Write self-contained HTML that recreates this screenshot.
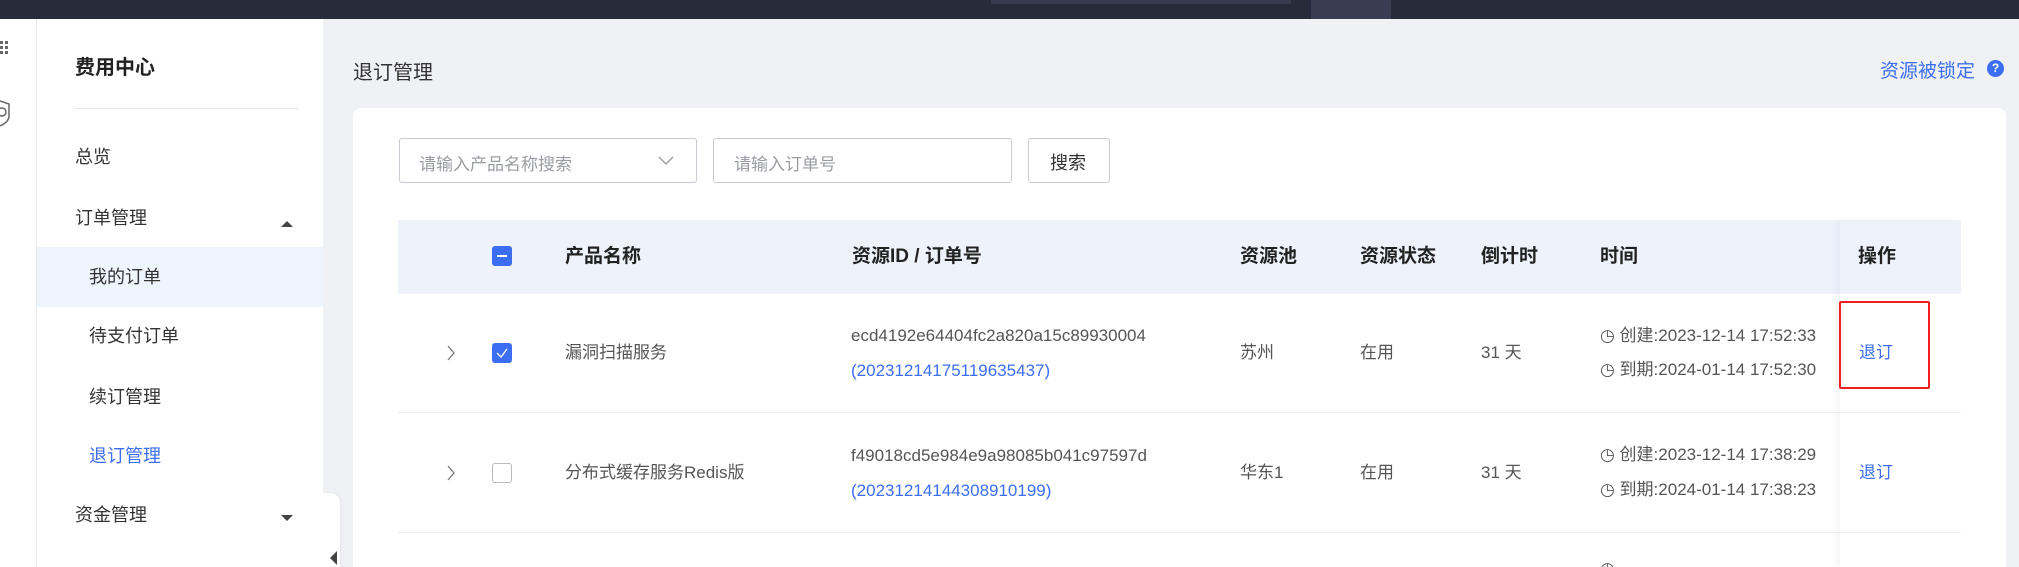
<!DOCTYPE html>
<html><head><meta charset="utf-8"><style>
*{margin:0;padding:0;box-sizing:border-box}
html{width:2019px;height:567px;overflow:hidden}
body{width:2019px;height:567px;overflow:hidden;background:#f0f1f5;font-family:"Liberation Sans","Noto Sans CJK SC",sans-serif;color:#333;position:relative}
.a{position:absolute;white-space:nowrap}
.top{left:0;top:0;width:2019px;height:19px;background:#272b3a}
.strip{left:0;top:19px;width:37px;height:548px;background:#fff;border-right:1px solid #e8e8ee}
.nav{left:37px;top:19px;width:286px;height:548px;background:#fff}
.mi{font-size:18px;color:#333;line-height:24px}
.card{left:353px;top:108px;width:1653px;height:459px;background:#fff;border-radius:8px 8px 0 0}
.box{border:1px solid #c9cbd2;border-radius:3px;background:#fff}
.ph{font-size:17px;color:#9a9ca3}
.th{font-size:19px;font-weight:bold;color:#222;line-height:24px}
.td{font-size:17px;color:#555;line-height:22px}
.bl{color:#3b6ef0}
.cb{width:20px;height:20px;border-radius:3px}
.hl{height:1px;background:#ebedf2}
</style></head><body>
<div class="a top"></div>
<div class="a" style="left:991px;top:0;width:300px;height:4px;background:#363b4d"></div>
<div class="a" style="left:1311px;top:0;width:80px;height:19px;background:#373e53"></div>
<div class="a strip"></div>
<svg class="a" style="left:0;top:40px" width="12" height="16"><g fill="#666"><rect x="0" y="1" width="3" height="3"/><rect x="5" y="1" width="3" height="3"/><rect x="0" y="6" width="3" height="3"/><rect x="5" y="6" width="3" height="3"/><rect x="0" y="11" width="3" height="3"/><rect x="5" y="11" width="3" height="3"/></g></svg>
<svg class="a" style="left:0;top:98px" width="12" height="30"><path d="M0 3 L9 6 V18 Q9 24 0 28" fill="none" stroke="#666" stroke-width="1.5"/><circle cx="2" cy="14" r="4" fill="none" stroke="#666" stroke-width="1.5"/></svg>
<div class="a nav"></div>
<div class="a" style="left:75px;top:51px;font-size:20px;font-weight:bold;color:#222">费用中心</div>
<div class="a" style="left:75px;top:108px;width:224px;height:1px;background:#e4e6ec"></div>
<div class="a mi" style="left:75px;top:145px">总览</div>
<div class="a mi" style="left:75px;top:206px">订单管理</div>
<div class="a" style="left:281px;top:221px;width:0;height:0;border-left:6px solid transparent;border-right:6px solid transparent;border-bottom:6px solid #444"></div>
<div class="a" style="left:37px;top:247px;width:286px;height:60px;background:#eef5fe"></div>
<div class="a mi" style="left:89px;top:265px">我的订单</div>
<div class="a mi" style="left:89px;top:324px">待支付订单</div>
<div class="a mi" style="left:89px;top:385px">续订管理</div>
<div class="a mi" style="left:89px;top:444px;color:#3b6ef0">退订管理</div>
<div class="a mi" style="left:75px;top:503px">资金管理</div>
<div class="a" style="left:281px;top:515px;width:0;height:0;border-left:6px solid transparent;border-right:6px solid transparent;border-top:6px solid #444"></div>
<div class="a" style="left:323px;top:493px;width:17px;height:74px;background:#fff;border-radius:0 10px 0 0;box-shadow:1px 0 3px rgba(0,0,0,.05)"></div>
<div class="a" style="left:330px;top:551px;width:0;height:0;border-top:7px solid transparent;border-bottom:7px solid transparent;border-right:7px solid #444"></div>

<div class="a" style="left:353px;top:56px;font-size:20px;color:#333">退订管理</div>
<div class="a bl" style="left:1880px;top:56px;font-size:19px">资源被锁定</div>
<div class="a" style="left:1987px;top:60px;width:17px;height:17px;border-radius:50%;background:#3b6ef0;color:#fff;font-size:12px;font-weight:bold;text-align:center;line-height:17px">?</div>

<div class="a card"></div>
<div class="a box" style="left:399px;top:138px;width:298px;height:45px"></div>
<div class="a ph" style="left:419px;top:150px">请输入产品名称搜索</div>
<svg class="a" style="left:658px;top:155px" width="16" height="12"><path d="M1 2 L8 9 L15 2" fill="none" stroke="#999" stroke-width="1.3"/></svg>
<div class="a box" style="left:713px;top:138px;width:299px;height:45px"></div>
<div class="a ph" style="left:734px;top:150px">请输入订单号</div>
<div class="a box" style="left:1028px;top:138px;width:82px;height:45px"></div>
<div class="a" style="left:1050px;top:149px;font-size:18px;color:#333">搜索</div>

<div class="a" style="left:398px;top:220px;width:1563px;height:74px;background:#eef2fb"></div>
<div class="a" style="left:1840px;top:220px;width:121px;height:347px;box-shadow:-4px 0 6px rgba(0,0,0,.04)"></div>
<div class="a" style="left:1840px;top:220px;width:121px;height:74px;background:#eef2fb"></div>
<div class="a cb" style="left:492px;top:246px;background:#3b6ef0"><div style="position:absolute;left:5px;top:9px;width:10px;height:2px;background:#fff"></div></div>
<div class="a th" style="left:565px;top:245px">产品名称</div>
<div class="a th" style="left:852px;top:245px">资源ID / 订单号</div>
<div class="a th" style="left:1240px;top:245px">资源池</div>
<div class="a th" style="left:1360px;top:245px">资源状态</div>
<div class="a th" style="left:1481px;top:245px">倒计时</div>
<div class="a th" style="left:1600px;top:245px">时间</div>
<div class="a th" style="left:1858px;top:245px">操作</div>

<div class="a hl" style="left:398px;top:412px;width:1563px"></div>
<div class="a hl" style="left:398px;top:532px;width:1563px"></div>

<svg class="a" style="left:446px;top:344px" width="10" height="18"><path d="M2 2 L8 9 L2 16" fill="none" stroke="#777" stroke-width="1.3"/></svg>
<div class="a cb" style="left:492px;top:343px;background:#3b6ef0"><svg width="20" height="20"><path d="M5 10 L9 14 L15 6" fill="none" stroke="#fff" stroke-width="1.3"/></svg></div>
<div class="a td" style="left:565px;top:342px">漏洞扫描服务</div>
<div class="a td" style="left:851px;top:325px">ecd4192e64404fc2a820a15c89930004</div>
<div class="a td bl" style="left:851px;top:360px">(20231214175119635437)</div>
<div class="a td" style="left:1240px;top:342px">苏州</div>
<div class="a td" style="left:1360px;top:342px">在用</div>
<div class="a td" style="left:1481px;top:342px">31 天</div>
<div class="a td" style="left:1600px;top:325px">◷ 创建:2023-12-14 17:52:33</div>
<div class="a td" style="left:1600px;top:359px">◷ 到期:2024-01-14 17:52:30</div>
<div class="a td bl" style="left:1859px;top:342px">退订</div>
<div class="a" style="left:1839px;top:301px;width:91px;height:88px;border:2px solid #f02020;border-radius:2px"></div>

<svg class="a" style="left:446px;top:464px" width="10" height="18"><path d="M2 2 L8 9 L2 16" fill="none" stroke="#777" stroke-width="1.3"/></svg>
<div class="a cb" style="left:492px;top:463px;border:1px solid #bbb;background:#fff"></div>
<div class="a td" style="left:565px;top:462px">分布式缓存服务Redis版</div>
<div class="a td" style="left:851px;top:445px">f49018cd5e984e9a98085b041c97597d</div>
<div class="a td bl" style="left:851px;top:480px">(20231214144308910199)</div>
<div class="a td" style="left:1240px;top:462px">华东1</div>
<div class="a td" style="left:1360px;top:462px">在用</div>
<div class="a td" style="left:1481px;top:462px">31 天</div>
<div class="a td" style="left:1600px;top:444px">◷ 创建:2023-12-14 17:38:29</div>
<div class="a td" style="left:1600px;top:479px">◷ 到期:2024-01-14 17:38:23</div>
<div class="a td bl" style="left:1859px;top:462px">退订</div>
<div class="a td" style="left:1600px;top:558px">◷</div>
</body></html>
